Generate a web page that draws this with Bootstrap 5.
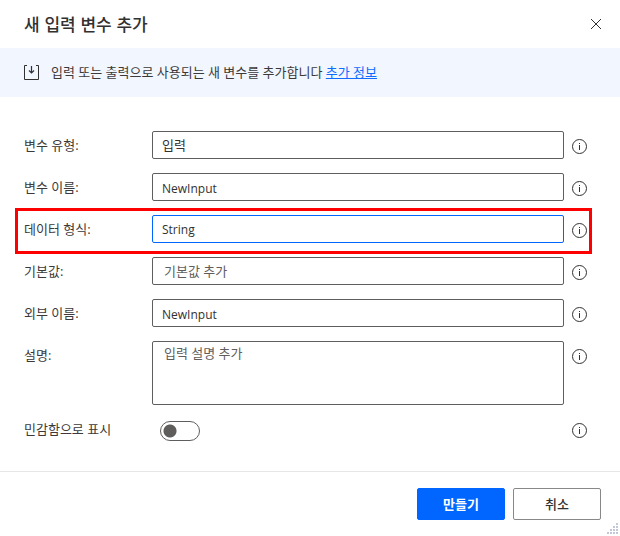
<!DOCTYPE html>
<html lang="ko">
<head>
<meta charset="utf-8">
<meta name="viewport" content="width=device-width, initial-scale=1">
<title>새 입력 변수 추가</title>
<link href="https://cdn.jsdelivr.net/npm/bootstrap@5.3.0/dist/css/bootstrap.min.css" rel="stylesheet">
<style>
  body { font-family: "Open Sans", "Noto Sans CJK KR", sans-serif; font-size: 13px; line-height: 20px; color: #3b3a39; background: #fff; }
  .dialog-head { height: 48px; padding: 0 16px 0 24px; }
  .dialog-title { font-size: 17px; line-height: 24px; font-weight: 500; font-family: "Noto Sans CJK KR", sans-serif; color: #323130; }
  .close-btn { width: 16px; height: 16px; }
  .banner { background: #f2f6ff; height: 49px; padding: 0 24px; gap: 11px; }
  .banner p { padding-bottom: 2px; }
  .banner a { color: #0f6cff; }
  .fields { padding: 34px 33px 30px 24px; gap: 14px; }
  .field { gap: 8px; }
  .field-label { width: 120px; padding-top: 4px; }
  .box { min-height: 28px; height: 28px; padding: 0 9px; border: 1px solid #605e5c; border-radius: 2px; font-size: 13px; line-height: 20px; color: #323130; }
  .box.latin { font-size: 12px; padding-top: 2px; }
  .box.active { border-color: #0066ff; }
  .box.hint { padding-left: 11px; }
  .box::placeholder { color: #605e5c; opacity: 1; }
  textarea.box { height: 64px; padding-top: 1px; resize: none; }
  .info-btn { width: 15px; height: 15px; margin-top: 8px; color: #323130; }
  .marked::before { content: ""; position: absolute; inset: -7px -5px -11px -9px; border: 3px solid #ff0000; pointer-events: none; }
  .toggle-row { padding-top: 2px; }
  .toggle-row .field-label { padding-top: 0; margin-top: -2px; }
  .toggle-row .info-btn { margin-top: 2px; }
  .switch { appearance: none; width: 40px; height: 20px; margin: 0 0 0 8px; border: 1px solid #605e5c; border-radius: 10px; background: radial-gradient(circle at 9px 9px, #605e5c 6px, transparent 7px); }
  .switch:checked { border-color: #0066ff; background: radial-gradient(circle at 29px 9px, #fff 6px, #0066ff 7px); }
  .dialog-foot { border-top: 1px solid #e6e6e6; padding: 16px 19px; gap: 8px; }
  .act { width: 88px; height: 32px; padding: 0; border-radius: 2px; font-size: 13px; line-height: 20px; font-family: "Noto Sans CJK KR", sans-serif; }
  .act-main { background: #0066ff; border-color: #0066ff; color: #fff; font-weight: 700; }
  .act-plain { background: #fff; border-color: #8a8886; color: #323130; font-weight: 500; }
  .grip { right: 2px; bottom: 2px; }
</style>
<script src="https://cdn.jsdelivr.net/npm/bootstrap@5.3.0/dist/js/bootstrap.bundle.min.js"></script>
</head>
<body>
<svg class="d-none" aria-hidden="true">
  <symbol id="info" viewBox="0 0 15 15">
    <circle cx="7.5" cy="7.5" r="7" fill="none" stroke="currentColor" stroke-width="1"/>
    <path d="M7 4h1v1H7zM7 6h1v5H7z" fill="currentColor"/>
  </symbol>
</svg>
<main>
  <header class="dialog-head d-flex align-items-center justify-content-between">
    <h1 class="dialog-title m-0">새 입력 변수 추가</h1>
    <button type="button" class="close-btn btn p-0 border-0 d-flex align-items-center justify-content-center" aria-label="닫기">
      <svg width="12" height="12" viewBox="0 0 12 12"><path d="M1 1l10 10M11 1L1 11" stroke="#323130" fill="none"/></svg>
    </button>
  </header>
  <div class="banner d-flex align-items-center">
    <svg width="16" height="16" viewBox="0 0 16 16" fill="none" stroke="#323130"><path d="M3 .5H.5v14h14V.5H12"/><path d="M7.5 1v7M5 5.500l2.500 2.500L10 5.500" stroke-width="1.2"/></svg>
    <p class="m-0">입력 또는 출력으로 사용되는 새 변수를 추가합니다 <a href="#">추가 정보</a></p>
  </div>
  <form>
    <div class="fields d-flex flex-column">
      <div class="field d-flex align-items-start">
        <label class="field-label flex-shrink-0" for="kind">변수 유형:</label>
        <select id="kind" class="box form-control"><option>입력</option></select>
        <button type="button" class="info-btn btn p-0 border-0 d-flex flex-shrink-0" aria-label="정보"><svg width="15" height="15"><use href="#info"/></svg></button>
      </div>
      <div class="field d-flex align-items-start">
        <label class="field-label flex-shrink-0" for="name">변수 이름:</label>
        <input id="name" type="text" class="box latin form-control" value="NewInput">
        <button type="button" class="info-btn btn p-0 border-0 d-flex flex-shrink-0" aria-label="정보"><svg width="15" height="15"><use href="#info"/></svg></button>
      </div>
      <div class="field marked position-relative d-flex align-items-start">
        <label class="field-label flex-shrink-0" for="type">데이터 형식:</label>
        <select id="type" class="box latin active form-control"><option>String</option></select>
        <button type="button" class="info-btn btn p-0 border-0 d-flex flex-shrink-0" aria-label="정보"><svg width="15" height="15"><use href="#info"/></svg></button>
      </div>
      <div class="field d-flex align-items-start">
        <label class="field-label flex-shrink-0" for="default">기본값:</label>
        <input id="default" type="text" class="box hint form-control" placeholder="기본값 추가">
        <button type="button" class="info-btn btn p-0 border-0 d-flex flex-shrink-0" aria-label="정보"><svg width="15" height="15"><use href="#info"/></svg></button>
      </div>
      <div class="field d-flex align-items-start">
        <label class="field-label flex-shrink-0" for="external">외부 이름:</label>
        <input id="external" type="text" class="box latin form-control" value="NewInput">
        <button type="button" class="info-btn btn p-0 border-0 d-flex flex-shrink-0" aria-label="정보"><svg width="15" height="15"><use href="#info"/></svg></button>
      </div>
      <div class="field d-flex align-items-start">
        <label class="field-label flex-shrink-0" for="description">설명:</label>
        <textarea id="description" class="box hint form-control" placeholder="입력 설명 추가"></textarea>
        <button type="button" class="info-btn btn p-0 border-0 d-flex flex-shrink-0" aria-label="정보"><svg width="15" height="15"><use href="#info"/></svg></button>
      </div>
      <div class="field toggle-row d-flex align-items-start">
        <label class="field-label flex-shrink-0" for="sensitive">민감함으로 표시</label>
        <input id="sensitive" type="checkbox" role="switch" class="switch">
        <button type="button" class="info-btn btn p-0 border-0 d-flex flex-shrink-0 ms-auto" aria-label="정보"><svg width="15" height="15"><use href="#info"/></svg></button>
      </div>
    </div>
    <footer class="dialog-foot position-relative d-flex justify-content-end">
      <button type="submit" class="act act-main btn">만들기</button>
      <button type="button" class="act act-plain btn">취소</button>
      <svg class="grip position-absolute" width="11" height="11" viewBox="0 0 11 11" fill="#c3c8d8" aria-hidden="true"><path d="M9 0h2v2H9zM9 3h2v2H9zM6 3h2v2H6zM9 6h2v2H9zM6 6h2v2H6zM3 6h2v2H3zM9 9h2v2H9zM6 9h2v2H6zM3 9h2v2H3zM0 9h2v2H0z"/></svg>
    </footer>
  </form>
</main>
</body>
</html>
